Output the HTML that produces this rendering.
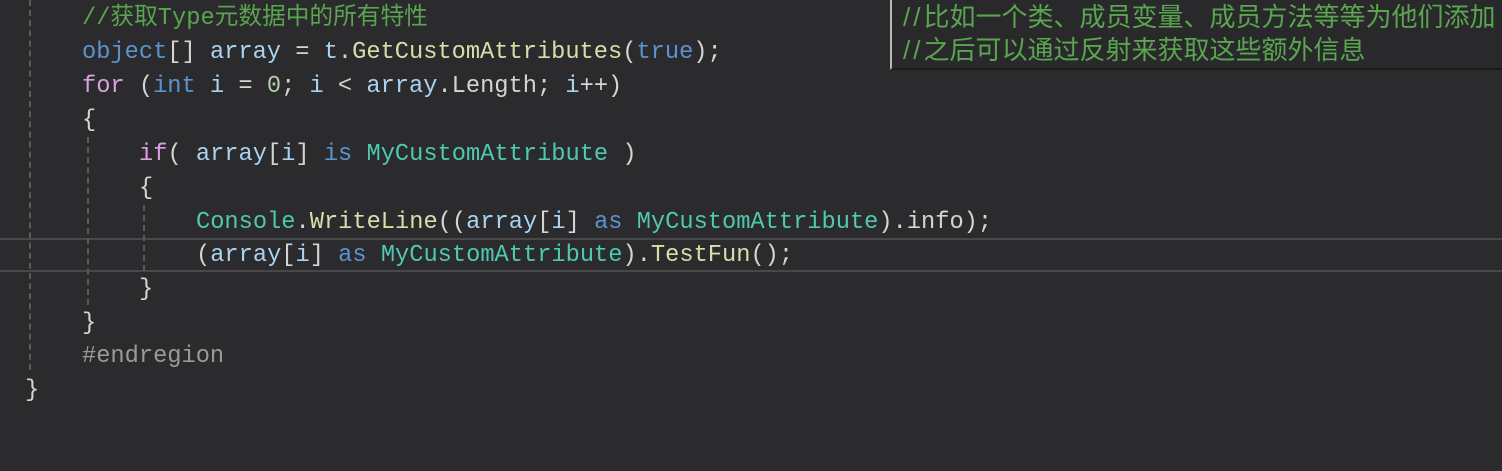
<!DOCTYPE html>
<html><head><meta charset="utf-8"><style>
html,body{margin:0;padding:0}
body{width:1502px;height:471px;background:#2b2a2d;overflow:hidden;position:relative;font-family:"Liberation Mono","Noto Sans CJK SC",monospace;font-size:23.7px;color:#d4d4d4}
.l{position:absolute;white-space:pre;line-height:34px;height:34px}
.c{color:#5aa550}.k{color:#5b93d0}.v{color:#a9d3f0}.m{color:#dcdcaa}.t{color:#4ec9b0}.p{color:#d8a0df}.g{color:#9a9a9a}.n{color:#b5cea8}
.guide{position:absolute;width:0;border-left:2px dashed #5a5a5a}
.hl{position:absolute;left:0;right:0;top:238px;height:30px;border-top:2px solid #48484a;border-bottom:2px solid #48484a}
.pop{position:absolute;left:890px;top:-2px;width:610px;height:70px;overflow:hidden;background:#29292b;border-left:2px solid #b8b8b8;border-bottom:2px solid #1c1c1c;font-family:"Liberation Sans","Noto Sans CJK SC",sans-serif;font-size:26px;color:#5aa550}
.pop div{position:absolute;left:11px;white-space:nowrap;line-height:33px}
.sl{letter-spacing:3px}
</style></head><body>
<div class="hl"></div>
<div class="guide" style="left:29px;top:0;height:370px"></div>
<div class="guide" style="left:87px;top:137px;height:168px"></div>
<div class="guide" style="left:143px;top:205px;height:66px"></div>
<div class="l c" style="left:82px;top:2px">//获取Type元数据中的所有特性</div>
<div class="l" style="left:82px;top:36px"><span class="k">object</span>[] <span class="v">array</span> = <span class="v">t</span>.<span class="m">GetCustomAttributes</span>(<span class="k">true</span>);</div>
<div class="l" style="left:82px;top:70px"><span class="p">for</span> (<span class="k">int</span> <span class="v">i</span> = <span class="n">0</span>; <span class="v">i</span> &lt; <span class="v">array</span>.Length; <span class="v">i</span>++)</div>
<div class="l" style="left:82px;top:104px">{</div>
<div class="l" style="left:139px;top:138px"><span class="p">if</span>( <span class="v">array</span>[<span class="v">i</span>] <span class="k">is</span> <span class="t">MyCustomAttribute</span> )</div>
<div class="l" style="left:139px;top:172px">{</div>
<div class="l" style="left:196px;top:206px"><span class="t">Console</span>.<span class="m">WriteLine</span>((<span class="v">array</span>[<span class="v">i</span>] <span class="k">as</span> <span class="t">MyCustomAttribute</span>).info);</div>
<div class="l" style="left:196px;top:239px">(<span class="v">array</span>[<span class="v">i</span>] <span class="k">as</span> <span class="t">MyCustomAttribute</span>).<span class="m">TestFun</span>();</div>
<div class="l" style="left:139px;top:273px">}</div>
<div class="l" style="left:82px;top:307px">}</div>
<div class="l g" style="left:82px;top:340px">#endregion</div>
<div class="l" style="left:25px;top:374px">}</div>
<div class="pop">
<div style="top:3px"><span class="sl">//</span>比如一个类、成员变量、成员方法等等为他们添加</div>
<div style="top:36px"><span class="sl">//</span>之后可以通过反射来获取这些额外信息</div>
</div>
</body></html>
